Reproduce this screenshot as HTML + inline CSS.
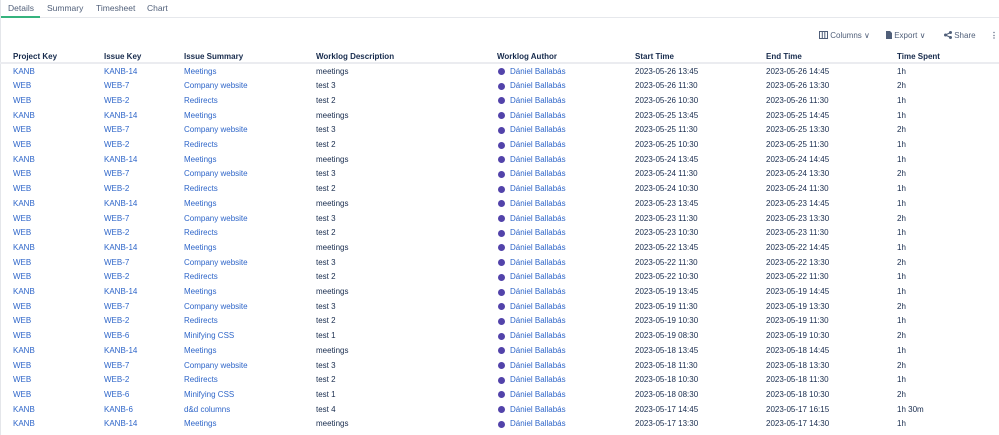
<!DOCTYPE html>
<html><head><meta charset="utf-8"><style>
*{margin:0;padding:0;box-sizing:border-box}
body{width:999px;height:435px;overflow:hidden;background:#fff;font-family:"Liberation Sans",sans-serif;font-size:8px;color:#172b4d;position:relative}
.lb{position:absolute;left:0;top:0;width:1px;height:435px;background:#e4e6ea}
.tabs{position:absolute;top:0;left:0;width:999px;height:18px;border-bottom:1px solid #e6e8ec}
.tab{position:absolute;top:3px;font-size:8.5px;color:#505f79}
.ul{position:absolute;left:1px;top:16px;width:39px;height:2px;background:#36b37e}
.tb{position:absolute;top:31px;font-size:8px;color:#505f79}
.hd{position:absolute;top:50px;left:0;width:999px;height:14px;border-bottom:2px solid #ebecf0;font-weight:bold;color:#172b4d}
.r{position:absolute;left:0;width:999px;height:14.7px}
.c{position:absolute;top:2px;white-space:nowrap}
.a{color:#2f66c9}
.av{position:absolute;top:3.5px;left:498px;width:7px;height:7px;border-radius:50%;background:#5243aa}
</style></head><body>
<div class="lb"></div>
<div class="tabs">
<span class="tab" style="left:8px">Details</span>
<span class="tab" style="left:47px">Summary</span>
<span class="tab" style="left:96px">Timesheet</span>
<span class="tab" style="left:147px">Chart</span>
<div class="ul"></div>
</div>
<div class="tb" style="left:819px"><svg width="9" height="8" viewBox="0 0 9 8" style="vertical-align:-1px"><rect x="0.5" y="0.5" width="8" height="7" fill="none" stroke="#505f79"/><line x1="3.3" y1="1" x2="3.3" y2="7" stroke="#505f79"/><line x1="5.8" y1="1" x2="5.8" y2="7" stroke="#505f79"/></svg> Columns ∨</div>
<div class="tb" style="left:886px"><svg width="6" height="8" viewBox="0 0 6 8" style="vertical-align:-1px"><path d="M0 0h4l2 2v6H0z" fill="#505f79"/></svg> Export ∨</div>
<div class="tb" style="left:944px"><svg width="8" height="8" viewBox="0 0 8 8" style="vertical-align:-1px"><circle cx="1.5" cy="4" r="1.5" fill="#505f79"/><circle cx="6.5" cy="1.5" r="1.5" fill="#505f79"/><circle cx="6.5" cy="6.5" r="1.5" fill="#505f79"/><path d="M1.5 4L6.5 1.5M1.5 4L6.5 6.5" stroke="#505f79"/></svg> Share</div>
<div class="tb" style="left:990px;font-weight:bold">⋮</div>
<div class="hd">
<span class="c" style="left:13px">Project Key</span><span class="c" style="left:104px">Issue Key</span><span class="c" style="left:184px">Issue Summary</span><span class="c" style="left:316px">Worklog Description</span><span class="c" style="left:497px">Worklog Author</span><span class="c" style="left:635px">Start Time</span><span class="c" style="left:766px">End Time</span><span class="c" style="left:897px">Time Spent</span>
</div>
<div id="rows">
<div class="r" style="top:64.5px"><span class="c a" style="left:13px">KANB</span><span class="c a" style="left:104px">KANB-14</span><span class="c a" style="left:184px">Meetings</span><span class="c" style="left:316px">meetings</span><span class="av"></span><span class="c a" style="left:510px">Dániel Ballabás</span><span class="c" style="left:635px">2023-05-26 13:45</span><span class="c" style="left:766px">2023-05-26 14:45</span><span class="c" style="left:897px">1h</span></div>
<div class="r" style="top:79.2px"><span class="c a" style="left:13px">WEB</span><span class="c a" style="left:104px">WEB-7</span><span class="c a" style="left:184px">Company website</span><span class="c" style="left:316px">test 3</span><span class="av"></span><span class="c a" style="left:510px">Dániel Ballabás</span><span class="c" style="left:635px">2023-05-26 11:30</span><span class="c" style="left:766px">2023-05-26 13:30</span><span class="c" style="left:897px">2h</span></div>
<div class="r" style="top:93.9px"><span class="c a" style="left:13px">WEB</span><span class="c a" style="left:104px">WEB-2</span><span class="c a" style="left:184px">Redirects</span><span class="c" style="left:316px">test 2</span><span class="av"></span><span class="c a" style="left:510px">Dániel Ballabás</span><span class="c" style="left:635px">2023-05-26 10:30</span><span class="c" style="left:766px">2023-05-26 11:30</span><span class="c" style="left:897px">1h</span></div>
<div class="r" style="top:108.6px"><span class="c a" style="left:13px">KANB</span><span class="c a" style="left:104px">KANB-14</span><span class="c a" style="left:184px">Meetings</span><span class="c" style="left:316px">meetings</span><span class="av"></span><span class="c a" style="left:510px">Dániel Ballabás</span><span class="c" style="left:635px">2023-05-25 13:45</span><span class="c" style="left:766px">2023-05-25 14:45</span><span class="c" style="left:897px">1h</span></div>
<div class="r" style="top:123.3px"><span class="c a" style="left:13px">WEB</span><span class="c a" style="left:104px">WEB-7</span><span class="c a" style="left:184px">Company website</span><span class="c" style="left:316px">test 3</span><span class="av"></span><span class="c a" style="left:510px">Dániel Ballabás</span><span class="c" style="left:635px">2023-05-25 11:30</span><span class="c" style="left:766px">2023-05-25 13:30</span><span class="c" style="left:897px">2h</span></div>
<div class="r" style="top:138px"><span class="c a" style="left:13px">WEB</span><span class="c a" style="left:104px">WEB-2</span><span class="c a" style="left:184px">Redirects</span><span class="c" style="left:316px">test 2</span><span class="av"></span><span class="c a" style="left:510px">Dániel Ballabás</span><span class="c" style="left:635px">2023-05-25 10:30</span><span class="c" style="left:766px">2023-05-25 11:30</span><span class="c" style="left:897px">1h</span></div>
<div class="r" style="top:152.7px"><span class="c a" style="left:13px">KANB</span><span class="c a" style="left:104px">KANB-14</span><span class="c a" style="left:184px">Meetings</span><span class="c" style="left:316px">meetings</span><span class="av"></span><span class="c a" style="left:510px">Dániel Ballabás</span><span class="c" style="left:635px">2023-05-24 13:45</span><span class="c" style="left:766px">2023-05-24 14:45</span><span class="c" style="left:897px">1h</span></div>
<div class="r" style="top:167.4px"><span class="c a" style="left:13px">WEB</span><span class="c a" style="left:104px">WEB-7</span><span class="c a" style="left:184px">Company website</span><span class="c" style="left:316px">test 3</span><span class="av"></span><span class="c a" style="left:510px">Dániel Ballabás</span><span class="c" style="left:635px">2023-05-24 11:30</span><span class="c" style="left:766px">2023-05-24 13:30</span><span class="c" style="left:897px">2h</span></div>
<div class="r" style="top:182.1px"><span class="c a" style="left:13px">WEB</span><span class="c a" style="left:104px">WEB-2</span><span class="c a" style="left:184px">Redirects</span><span class="c" style="left:316px">test 2</span><span class="av"></span><span class="c a" style="left:510px">Dániel Ballabás</span><span class="c" style="left:635px">2023-05-24 10:30</span><span class="c" style="left:766px">2023-05-24 11:30</span><span class="c" style="left:897px">1h</span></div>
<div class="r" style="top:196.8px"><span class="c a" style="left:13px">KANB</span><span class="c a" style="left:104px">KANB-14</span><span class="c a" style="left:184px">Meetings</span><span class="c" style="left:316px">meetings</span><span class="av"></span><span class="c a" style="left:510px">Dániel Ballabás</span><span class="c" style="left:635px">2023-05-23 13:45</span><span class="c" style="left:766px">2023-05-23 14:45</span><span class="c" style="left:897px">1h</span></div>
<div class="r" style="top:211.5px"><span class="c a" style="left:13px">WEB</span><span class="c a" style="left:104px">WEB-7</span><span class="c a" style="left:184px">Company website</span><span class="c" style="left:316px">test 3</span><span class="av"></span><span class="c a" style="left:510px">Dániel Ballabás</span><span class="c" style="left:635px">2023-05-23 11:30</span><span class="c" style="left:766px">2023-05-23 13:30</span><span class="c" style="left:897px">2h</span></div>
<div class="r" style="top:226.2px"><span class="c a" style="left:13px">WEB</span><span class="c a" style="left:104px">WEB-2</span><span class="c a" style="left:184px">Redirects</span><span class="c" style="left:316px">test 2</span><span class="av"></span><span class="c a" style="left:510px">Dániel Ballabás</span><span class="c" style="left:635px">2023-05-23 10:30</span><span class="c" style="left:766px">2023-05-23 11:30</span><span class="c" style="left:897px">1h</span></div>
<div class="r" style="top:240.9px"><span class="c a" style="left:13px">KANB</span><span class="c a" style="left:104px">KANB-14</span><span class="c a" style="left:184px">Meetings</span><span class="c" style="left:316px">meetings</span><span class="av"></span><span class="c a" style="left:510px">Dániel Ballabás</span><span class="c" style="left:635px">2023-05-22 13:45</span><span class="c" style="left:766px">2023-05-22 14:45</span><span class="c" style="left:897px">1h</span></div>
<div class="r" style="top:255.6px"><span class="c a" style="left:13px">WEB</span><span class="c a" style="left:104px">WEB-7</span><span class="c a" style="left:184px">Company website</span><span class="c" style="left:316px">test 3</span><span class="av"></span><span class="c a" style="left:510px">Dániel Ballabás</span><span class="c" style="left:635px">2023-05-22 11:30</span><span class="c" style="left:766px">2023-05-22 13:30</span><span class="c" style="left:897px">2h</span></div>
<div class="r" style="top:270.3px"><span class="c a" style="left:13px">WEB</span><span class="c a" style="left:104px">WEB-2</span><span class="c a" style="left:184px">Redirects</span><span class="c" style="left:316px">test 2</span><span class="av"></span><span class="c a" style="left:510px">Dániel Ballabás</span><span class="c" style="left:635px">2023-05-22 10:30</span><span class="c" style="left:766px">2023-05-22 11:30</span><span class="c" style="left:897px">1h</span></div>
<div class="r" style="top:285px"><span class="c a" style="left:13px">KANB</span><span class="c a" style="left:104px">KANB-14</span><span class="c a" style="left:184px">Meetings</span><span class="c" style="left:316px">meetings</span><span class="av"></span><span class="c a" style="left:510px">Dániel Ballabás</span><span class="c" style="left:635px">2023-05-19 13:45</span><span class="c" style="left:766px">2023-05-19 14:45</span><span class="c" style="left:897px">1h</span></div>
<div class="r" style="top:299.7px"><span class="c a" style="left:13px">WEB</span><span class="c a" style="left:104px">WEB-7</span><span class="c a" style="left:184px">Company website</span><span class="c" style="left:316px">test 3</span><span class="av"></span><span class="c a" style="left:510px">Dániel Ballabás</span><span class="c" style="left:635px">2023-05-19 11:30</span><span class="c" style="left:766px">2023-05-19 13:30</span><span class="c" style="left:897px">2h</span></div>
<div class="r" style="top:314.4px"><span class="c a" style="left:13px">WEB</span><span class="c a" style="left:104px">WEB-2</span><span class="c a" style="left:184px">Redirects</span><span class="c" style="left:316px">test 2</span><span class="av"></span><span class="c a" style="left:510px">Dániel Ballabás</span><span class="c" style="left:635px">2023-05-19 10:30</span><span class="c" style="left:766px">2023-05-19 11:30</span><span class="c" style="left:897px">1h</span></div>
<div class="r" style="top:329.1px"><span class="c a" style="left:13px">WEB</span><span class="c a" style="left:104px">WEB-6</span><span class="c a" style="left:184px">Minifying CSS</span><span class="c" style="left:316px">test 1</span><span class="av"></span><span class="c a" style="left:510px">Dániel Ballabás</span><span class="c" style="left:635px">2023-05-19 08:30</span><span class="c" style="left:766px">2023-05-19 10:30</span><span class="c" style="left:897px">2h</span></div>
<div class="r" style="top:343.8px"><span class="c a" style="left:13px">KANB</span><span class="c a" style="left:104px">KANB-14</span><span class="c a" style="left:184px">Meetings</span><span class="c" style="left:316px">meetings</span><span class="av"></span><span class="c a" style="left:510px">Dániel Ballabás</span><span class="c" style="left:635px">2023-05-18 13:45</span><span class="c" style="left:766px">2023-05-18 14:45</span><span class="c" style="left:897px">1h</span></div>
<div class="r" style="top:358.5px"><span class="c a" style="left:13px">WEB</span><span class="c a" style="left:104px">WEB-7</span><span class="c a" style="left:184px">Company website</span><span class="c" style="left:316px">test 3</span><span class="av"></span><span class="c a" style="left:510px">Dániel Ballabás</span><span class="c" style="left:635px">2023-05-18 11:30</span><span class="c" style="left:766px">2023-05-18 13:30</span><span class="c" style="left:897px">2h</span></div>
<div class="r" style="top:373.2px"><span class="c a" style="left:13px">WEB</span><span class="c a" style="left:104px">WEB-2</span><span class="c a" style="left:184px">Redirects</span><span class="c" style="left:316px">test 2</span><span class="av"></span><span class="c a" style="left:510px">Dániel Ballabás</span><span class="c" style="left:635px">2023-05-18 10:30</span><span class="c" style="left:766px">2023-05-18 11:30</span><span class="c" style="left:897px">1h</span></div>
<div class="r" style="top:387.9px"><span class="c a" style="left:13px">WEB</span><span class="c a" style="left:104px">WEB-6</span><span class="c a" style="left:184px">Minifying CSS</span><span class="c" style="left:316px">test 1</span><span class="av"></span><span class="c a" style="left:510px">Dániel Ballabás</span><span class="c" style="left:635px">2023-05-18 08:30</span><span class="c" style="left:766px">2023-05-18 10:30</span><span class="c" style="left:897px">2h</span></div>
<div class="r" style="top:402.6px"><span class="c a" style="left:13px">KANB</span><span class="c a" style="left:104px">KANB-6</span><span class="c a" style="left:184px">d&amp;d columns</span><span class="c" style="left:316px">test 4</span><span class="av"></span><span class="c a" style="left:510px">Dániel Ballabás</span><span class="c" style="left:635px">2023-05-17 14:45</span><span class="c" style="left:766px">2023-05-17 16:15</span><span class="c" style="left:897px">1h 30m</span></div>
<div class="r" style="top:417.3px"><span class="c a" style="left:13px">KANB</span><span class="c a" style="left:104px">KANB-14</span><span class="c a" style="left:184px">Meetings</span><span class="c" style="left:316px">meetings</span><span class="av"></span><span class="c a" style="left:510px">Dániel Ballabás</span><span class="c" style="left:635px">2023-05-17 13:30</span><span class="c" style="left:766px">2023-05-17 14:30</span><span class="c" style="left:897px">1h</span></div>
</div>
</body></html>
